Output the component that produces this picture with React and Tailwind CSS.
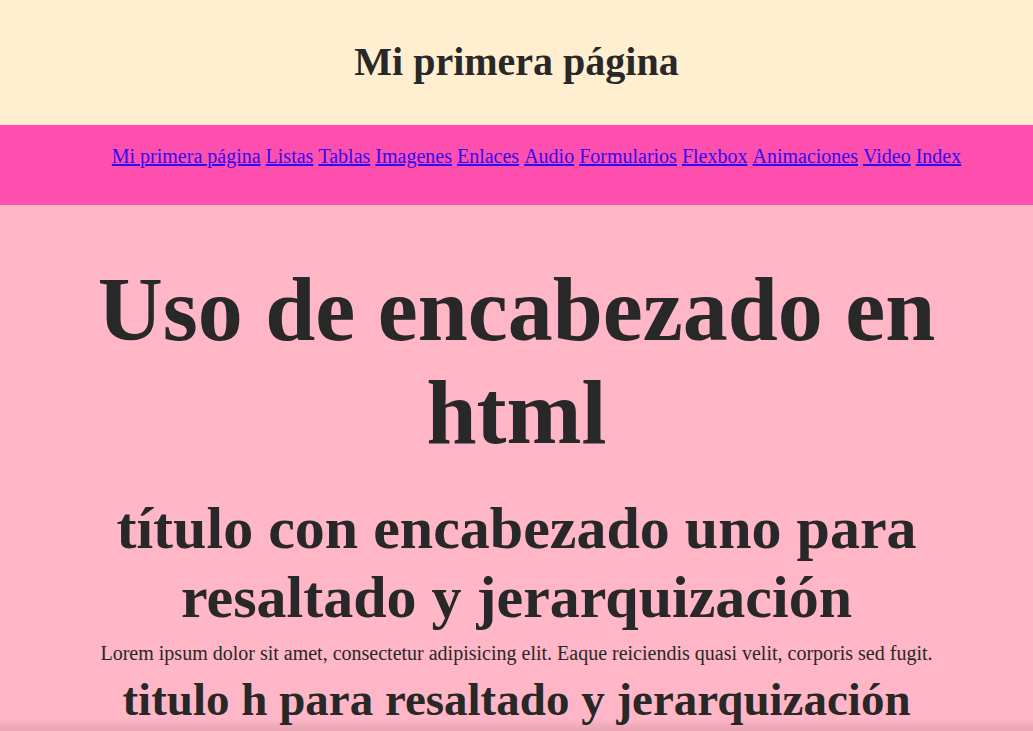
import React from 'react';

const links = [
  'Mi primera página',
  'Listas',
  'Tablas',
  'Imagenes',
  'Enlaces',
  'Audio',
  'Formularios',
  'Flexbox',
  'Animaciones',
  'Video',
  'Index',
];

const App = () => {
  return (
    <div className="min-h-screen bg-[#ffb6c6] text-[#282828] font-['Liberation_Serif','Times_New_Roman',serif]">
      <header className="h-[125px] bg-[#ffefd0] flex items-center justify-center">
        <h1 className="text-[40px] font-bold leading-[normal] pb-[3px]">Mi primera página</h1>
      </header>

      <nav className="h-[80px] bg-[#ff4fae] pt-[20px]">
        <ul className="pl-10 text-center text-[20px] leading-[normal]">
          {links.map((link, index) => (
            <li key={index} className="inline">
              <a href="#" className="text-[#2f0df2] underline">
                {link}
              </a>{' '}
            </li>
          ))}
        </ul>
      </nav>

      <main className="text-center pt-[53px] px-2">
        <h1 className="text-[90px] font-bold leading-[normal]">Uso de encabezado en html</h1>
        <h2 className="mt-[30px] text-[60px] font-bold leading-[normal]">
          título con encabezado uno para resaltado y jerarquización
        </h2>
        <p className="mt-[10px] text-[20px] leading-[normal]">
          Lorem ipsum dolor sit amet, consectetur adipisicing elit. Eaque reiciendis quasi velit, corporis sed fugit.
        </p>
        <h2 className="mt-[7px] text-[47px] font-bold leading-[normal]">
          titulo h para resaltado y jerarquización
        </h2>
      </main>

      <div className="pointer-events-none fixed bottom-0 left-0 right-0 h-[12px] bg-gradient-to-t from-black/10 to-transparent" />
    </div>
  );
};

export default App;
